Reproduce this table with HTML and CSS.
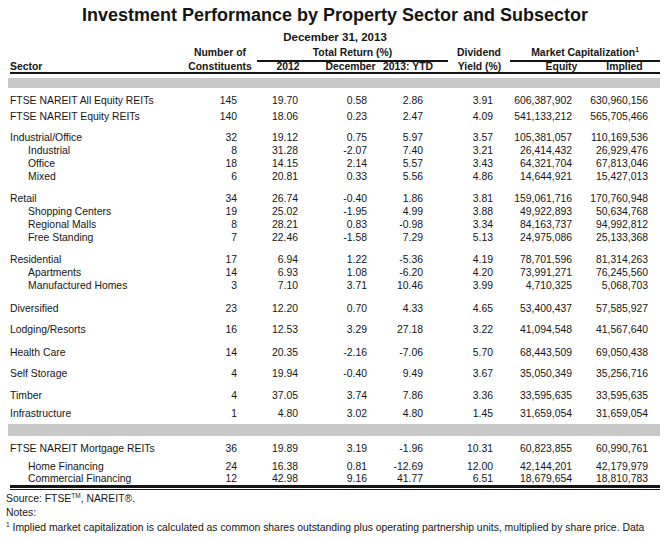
FILE: index.html
```html
<!DOCTYPE html>
<html>
<head>
<meta charset="utf-8">
<link rel="stylesheet" href="styles.css">
</head>
<body>
<div class="page">
  <h1 class="title">Investment Performance by Property Sector and Subsector</h1>
  <div class="date">December 31, 2013</div>

  <div class="head1">
    <div></div>
    <div class="c2">Number of</div>
    <div></div>
    <div class="grp">Total Return (%)</div>
    <div>Dividend</div>
    <div class="grp">Market Capitalization<sup>1</sup></div>
  </div>
  <div class="head2">
    <div class="sector">Sector</div>
    <div>Constituents</div>
    <div>2012</div>
    <div>December</div>
    <div>2013: YTD</div>
    <div>Yield (%)</div>
    <div>Equity</div>
    <div>Implied</div>
    <div></div>
  </div>

  <div class="band"></div>

  <div class="row m6"><span class="name">FTSE NAREIT All Equity REITs</span><span>145</span><span>19.70</span><span>0.58</span><span>2.86</span><span>3.91</span><span>606,387,902</span><span>630,960,156</span></div>
  <div class="row m3"><span class="name">FTSE NAREIT Equity REITs</span><span>140</span><span>18.06</span><span>0.23</span><span>2.47</span><span>4.09</span><span>541,133,212</span><span>565,705,466</span></div>

  <div class="row m8"><span class="name">Industrial/Office</span><span>32</span><span>19.12</span><span>0.75</span><span>5.97</span><span>3.57</span><span>105,381,057</span><span>110,169,536</span></div>
  <div class="row sub"><span class="name">Industrial</span><span>8</span><span>31.28</span><span>-2.07</span><span>7.40</span><span>3.21</span><span>26,414,432</span><span>26,929,476</span></div>
  <div class="row sub"><span class="name">Office</span><span>18</span><span>14.15</span><span>2.14</span><span>5.57</span><span>3.43</span><span>64,321,704</span><span>67,813,046</span></div>
  <div class="row sub"><span class="name">Mixed</span><span>6</span><span>20.81</span><span>0.33</span><span>5.56</span><span>4.86</span><span>14,644,921</span><span>15,427,013</span></div>

  <div class="row m9"><span class="name">Retail</span><span>34</span><span>26.74</span><span>-0.40</span><span>1.86</span><span>3.81</span><span>159,061,716</span><span>170,760,948</span></div>
  <div class="row sub"><span class="name">Shopping Centers</span><span>19</span><span>25.02</span><span>-1.95</span><span>4.99</span><span>3.88</span><span>49,922,893</span><span>50,634,768</span></div>
  <div class="row sub"><span class="name">Regional Malls</span><span>8</span><span>28.21</span><span>0.83</span><span>-0.98</span><span>3.34</span><span>84,163,737</span><span>94,992,812</span></div>
  <div class="row sub"><span class="name">Free Standing</span><span>7</span><span>22.46</span><span>-1.58</span><span>7.29</span><span>5.13</span><span>24,975,086</span><span>25,133,368</span></div>

  <div class="row m9"><span class="name">Residential</span><span>17</span><span>6.94</span><span>1.22</span><span>-5.36</span><span>4.19</span><span>78,701,596</span><span>81,314,263</span></div>
  <div class="row sub"><span class="name">Apartments</span><span>14</span><span>6.93</span><span>1.08</span><span>-6.20</span><span>4.20</span><span>73,991,271</span><span>76,245,560</span></div>
  <div class="row sub"><span class="name">Manufactured Homes</span><span>3</span><span>7.10</span><span>3.71</span><span>10.46</span><span>3.99</span><span>4,710,325</span><span>5,068,703</span></div>

  <div class="row m10"><span class="name">Diversified</span><span>23</span><span>12.20</span><span>0.70</span><span>4.33</span><span>4.65</span><span>53,400,437</span><span>57,585,927</span></div>
  <div class="row m8"><span class="name">Lodging/Resorts</span><span>16</span><span>12.53</span><span>3.29</span><span>27.18</span><span>3.22</span><span>41,094,548</span><span>41,567,640</span></div>
  <div class="row m10"><span class="name">Health Care</span><span>14</span><span>20.35</span><span>-2.16</span><span>-7.06</span><span>5.70</span><span>68,443,509</span><span>69,050,438</span></div>
  <div class="row m8"><span class="name">Self Storage</span><span>4</span><span>19.94</span><span>-0.40</span><span>9.49</span><span>3.67</span><span>35,050,349</span><span>35,256,716</span></div>
  <div class="row m9"><span class="name">Timber</span><span>4</span><span>37.05</span><span>3.74</span><span>7.86</span><span>3.36</span><span>33,595,635</span><span>33,595,635</span></div>
  <div class="row m5"><span class="name">Infrastructure</span><span>1</span><span>4.80</span><span>3.02</span><span>4.80</span><span>1.45</span><span>31,659,054</span><span>31,659,054</span></div>

  <div class="band band2"></div>

  <div class="row m6"><span class="name">FTSE NAREIT Mortgage REITs</span><span>36</span><span>19.89</span><span>3.19</span><span>-1.96</span><span>10.31</span><span>60,823,855</span><span>60,990,761</span></div>
  <div class="row sub m5"><span class="name">Home Financing</span><span>24</span><span>16.38</span><span>0.81</span><span>-12.69</span><span>12.00</span><span>42,144,201</span><span>42,179,979</span></div>
  <div class="row sub mneg"><span class="name">Commercial Financing</span><span>12</span><span>42.98</span><span>9.16</span><span>41.77</span><span>6.51</span><span>18,679,654</span><span>18,810,783</span></div>

  <div class="double"></div>

  <div class="foot">
    <p class="source">Source: FTSE<sup>TM</sup>, NAREIT®.</p>
    <p class="notes">Notes:</p>
    <p class="note1"><sup>1</sup> Implied market capitalization is calculated as common shares outstanding plus operating partnership units, multiplied by share price. Data</p>
  </div>
</div>
</body>
</html>
```

FILE: styles.css
```css
* { box-sizing: border-box; margin: 0; padding: 0; }
html, body { background: #fff; }
body {
  margin: 0;
  width: 670px;
  height: 539px;
  overflow: hidden;
  color: #151515;
  font-family: "Liberation Sans", Arial, sans-serif;
}
.page { padding: 0 10px; }

.title {
  font-size: 18px;
  font-weight: 700;
  line-height: 20px;
  text-align: center;
  padding-top: 5px;
  white-space: nowrap;
}
.date {
  font-size: 11.5px;
  font-weight: 700;
  line-height: 14px;
  text-align: center;
  margin-top: 5px;
}

.head1 {
  display: grid;
  grid-template-columns: 175px 70px 2px 191px 62px 150px;
  margin-top: 3px;
  font-size: 10.4px;
  font-weight: 700;
  line-height: 12px;
  text-align: center;
  white-space: nowrap;
}
.head1 .grp {
  border-bottom: 2px solid #151515;
  padding-bottom: 1px;
}
.head1 sup, .foot sup {
  font-size: 6.5px;
  line-height: 0;
  vertical-align: 4px;
}
.head2 {
  display: grid;
  grid-template-columns: 175px 70px 66px 59px 56px 87px 77px 49px 11px;
  font-size: 10.4px;
  font-weight: 700;
  line-height: 10px;
  height: 12px;
  text-align: center;
  white-space: nowrap;
  border-bottom: 2px solid #151515;
}
.head2 .sector { text-align: left; }

.band {
  height: 10px;
  background: #c8c8c8;
  margin: 4px 0 0 -2px;
}
.band2 { height: 12px; }

.row {
  display: grid;
  grid-template-columns: 190px 37px 61px 69px 56px 70px 79px 76px 12px;
  font-size: 10.4px;
  line-height: 13px;
  height: 13px;
  text-align: right;
  white-space: nowrap;
}
.row .name { text-align: left; }
.row.sub .name { padding-left: 18px; }

.m3 { margin-top: 3px; }
.m5 { margin-top: 5px; }
.m6 { margin-top: 6px; }
.m8 { margin-top: 8px; }
.m9 { margin-top: 9px; }
.m10 { margin-top: 10px; }
.mneg { margin-top: -1px; }

.double {
  height: 5px;
  border-top: 3px solid #151515;
  border-bottom: 1px solid #151515;
}

.foot {
  margin-left: -4px;
  margin-right: -10px;
  font-size: 10.4px;
  line-height: 14px;
  white-space: nowrap;
}
.source { margin-top: 2px; }
.note1 { margin-top: 1px; }
```
